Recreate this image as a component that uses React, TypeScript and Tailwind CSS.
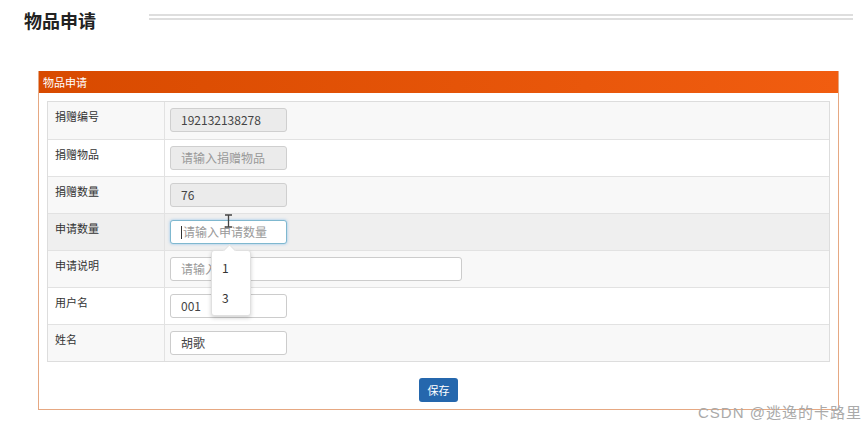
import React from 'react'

const font = { fontFamily: '"Noto Sans CJK SC", "Noto Sans", sans-serif' }

type Row = {
  label: string
  value?: string
  placeholder?: string
  disabled?: boolean
  wide?: boolean
  focused?: boolean
}

const rows: Row[] = [
  { label: '捐赠编号', value: '192132138278', disabled: true },
  { label: '捐赠物品', placeholder: '请输入捐赠物品', disabled: true },
  { label: '捐赠数量', value: '76', disabled: true },
  { label: '申请数量', placeholder: '请输入申请数量', focused: true },
  { label: '申请说明', placeholder: '请输入', wide: true },
  { label: '用户名', value: '001' },
  { label: '姓名', value: '胡歌' },
]

function Field({ row }: { row: Row }) {
  const base =
    'flex h-[24px] items-center rounded-[3px] border pl-[10px] text-[12px] leading-none'
  const tone = row.disabled
    ? 'border-[#cfcfcf] bg-[#ebebeb]'
    : row.focused
      ? 'border-[#7fb8cf] bg-white pl-[9px] shadow-[0_0_3px_rgba(102,175,233,0.7)]'
      : 'border-[#cccccc] bg-white'
  const width = row.wide ? 'w-[292px]' : 'w-[117px]'
  return (
    <div className={`${base} ${tone} ${width}`}>
      {row.focused && <span className="mr-[1px] h-[13px] w-px bg-[#333]" />}
      {row.value ? (
        <span className="text-[#444]">{row.value}</span>
      ) : (
        <span className="text-[#999]">{row.placeholder}</span>
      )}
    </div>
  )
}

export default function App() {
  return (
    <div className="relative h-[429px] w-[866px] overflow-hidden bg-white" style={font}>
      <div className="flex h-[71px] items-start pt-[9px]">
        <h1 className="ml-[24px] w-[125px] text-[18px] font-bold leading-[22px] text-[#222]">
          物品申请
        </h1>
        <div className="mt-[5px] h-[6px] w-[704px] border-y-2 border-[#dedede]" />
      </div>

      <div className="ml-[38px] w-[801px] border border-t-0 border-[#e6a882]">
        <div className="flex h-[22px] items-center bg-gradient-to-r from-[#d84a00] to-[#f15d10] pl-[4px] text-[11px] text-white">
          物品申请
        </div>
        <div className="px-[8px] pt-[8px] pb-[7px]">
          <div className="border border-[#dddddd]">
            {rows.map((row, i) => {
              const bg = row.focused ? 'bg-[#efefef]' : i % 2 === 0 ? 'bg-[#f8f8f8]' : 'bg-white'
              return (
                <div
                  key={row.label}
                  className={`flex h-[37px] ${bg} ${i > 0 ? 'border-t border-[#e2e2e2]' : ''}`}
                >
                  <div className="w-[117px] border-r border-[#e2e2e2] pl-[7px] pt-[7px] text-[11px] leading-[14px] text-[#333]">
                    {row.label}
                  </div>
                  <div className="pl-[5px] pt-[6px]">
                    <Field row={row} />
                  </div>
                </div>
              )
            })}
          </div>
          <div className="mt-[16px] flex justify-center">
            <button className="h-[24px] w-[39px] rounded-[3px] bg-[#2567ad] text-[11px] text-white">
              保存
            </button>
          </div>
        </div>
      </div>

      {/* autocomplete popup */}
      <div className="absolute left-[211px] top-[250px] h-[66px] w-[40px] rounded-[3px] border border-[#e0e0e0] bg-white text-[12px] text-[#333] shadow-[0_2px_4px_rgba(0,0,0,0.18)]">
        <div className="absolute -top-[5px] left-[13px] h-[9px] w-[9px] rotate-45 border-l border-t border-[#e0e0e0] bg-white" />
        <div className="pl-[10px] pt-[10px] leading-[14px]">1</div>
        <div className="pl-[10px] pt-[16px] leading-[14px]">3</div>
      </div>

      {/* text cursor */}
      <svg className="absolute left-[224px] top-[214px]" width="9" height="14" viewBox="0 0 9 14">
        <path d="M1 1h7M1 13h7M4.5 1v12" stroke="#444" strokeWidth="1.3" fill="none" />
      </svg>

      <div
        className="absolute left-[698px] top-[404px] text-[15px] leading-[18px] tracking-[1px] text-[#aaaaaa]"
        style={{ fontFamily: '"Liberation Sans", "Noto Sans CJK SC", sans-serif' }}
      >
        CSDN @逃逸的卡路里
      </div>
    </div>
  )
}
